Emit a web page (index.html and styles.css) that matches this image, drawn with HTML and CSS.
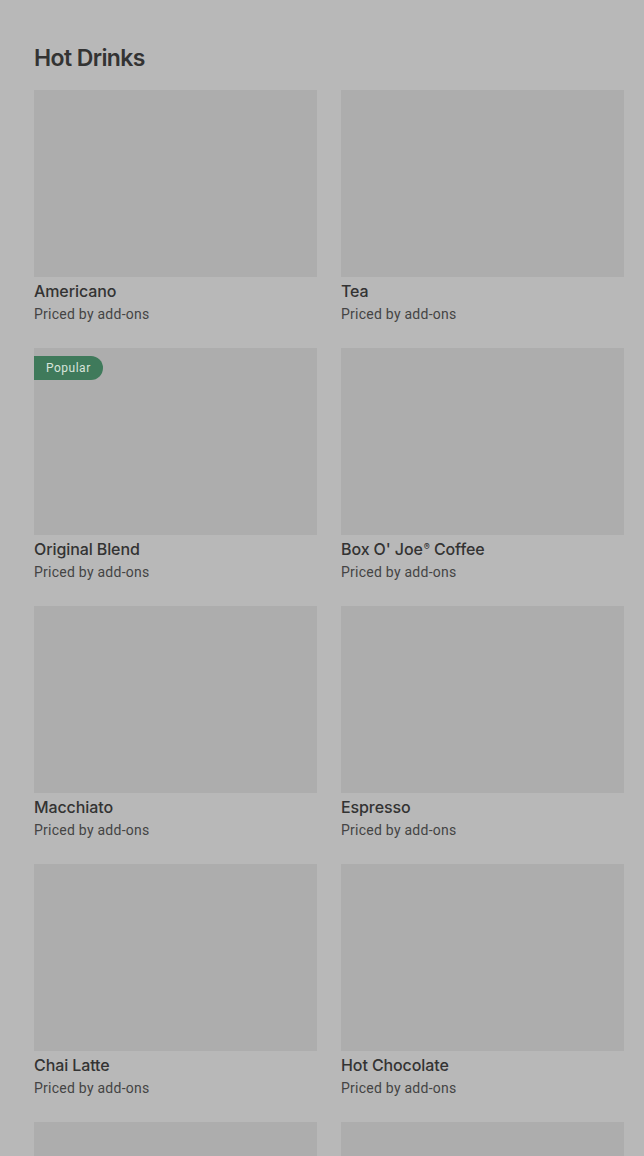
FILE: index.html
```html
<!DOCTYPE html>
<html>
<head>
<meta charset="utf-8">
<link rel="stylesheet" href="styles.css">
</head>
<body>
<main class="page">
  <h2 class="section-title">Hot Drinks</h2>
  <div class="grid">
    <div class="card"><div class="thumb"></div><div class="name">Americano</div><div class="price">Priced by add-ons</div></div>
    <div class="card"><div class="thumb"></div><div class="name">Tea</div><div class="price">Priced by add-ons</div></div>
    <div class="card"><div class="thumb"><span class="badge">Popular</span></div><div class="name">Original Blend</div><div class="price">Priced by add-ons</div></div>
    <div class="card"><div class="thumb"></div><div class="name">Box O' Joe<span class="reg">®</span> Coffee</div><div class="price">Priced by add-ons</div></div>
    <div class="card"><div class="thumb"></div><div class="name">Macchiato</div><div class="price">Priced by add-ons</div></div>
    <div class="card"><div class="thumb"></div><div class="name">Espresso</div><div class="price">Priced by add-ons</div></div>
    <div class="card"><div class="thumb"></div><div class="name">Chai Latte</div><div class="price">Priced by add-ons</div></div>
    <div class="card"><div class="thumb"></div><div class="name">Hot Chocolate</div><div class="price">Priced by add-ons</div></div>
    <div class="card"><div class="thumb"></div></div>
    <div class="card"><div class="thumb"></div></div>
  </div>
</main>
</body>
</html>
```
FILE: styles.css
```css
html, body {
  margin: 0;
  padding: 0;
  background: #b8b8b8;
  height: 1156px;
  overflow: hidden;
}
.page {
  padding: 44px 20px 0 34px;
  font-family: "Inter", "Roboto", sans-serif;
  color: #333;
}
.section-title {
  margin: 0 0 18px 0;
  font-size: 23px;
  line-height: 28px;
  font-weight: 600;
  letter-spacing: -0.6px;
  color: #333;
}
.grid {
  display: grid;
  grid-template-columns: 283px 283px;
  column-gap: 24px;
  row-gap: 24px;
}
.card {
  display: flex;
  flex-direction: column;
}
.thumb {
  position: relative;
  height: 187px;
  background: #adadad;
  margin-bottom: 4px;
}
.badge {
  position: absolute;
  left: 0;
  top: 8px;
  height: 24px;
  line-height: 24px;
  padding: 0 12px;
  background: #3f7a5b;
  color: #d8e4dc;
  font-family: "Roboto", sans-serif;
  font-size: 12px;
  letter-spacing: 0.5px;
  border-radius: 0 12px 12px 0;
}
.name {
  height: 20px;
  font-family: "Inter", sans-serif;
  font-size: 16px;
  line-height: 20px;
  font-weight: 500;
  letter-spacing: -0.1px;
  color: #333;
}
.reg {
  font-size: 9px;
  line-height: 0;
  vertical-align: 5px;
  margin-left: 1px;
}
.price {
  margin-top: 3px;
  font-family: "Roboto", sans-serif;
  font-size: 14px;
  line-height: 20px;
  letter-spacing: 0.25px;
  color: #444;
}
```
